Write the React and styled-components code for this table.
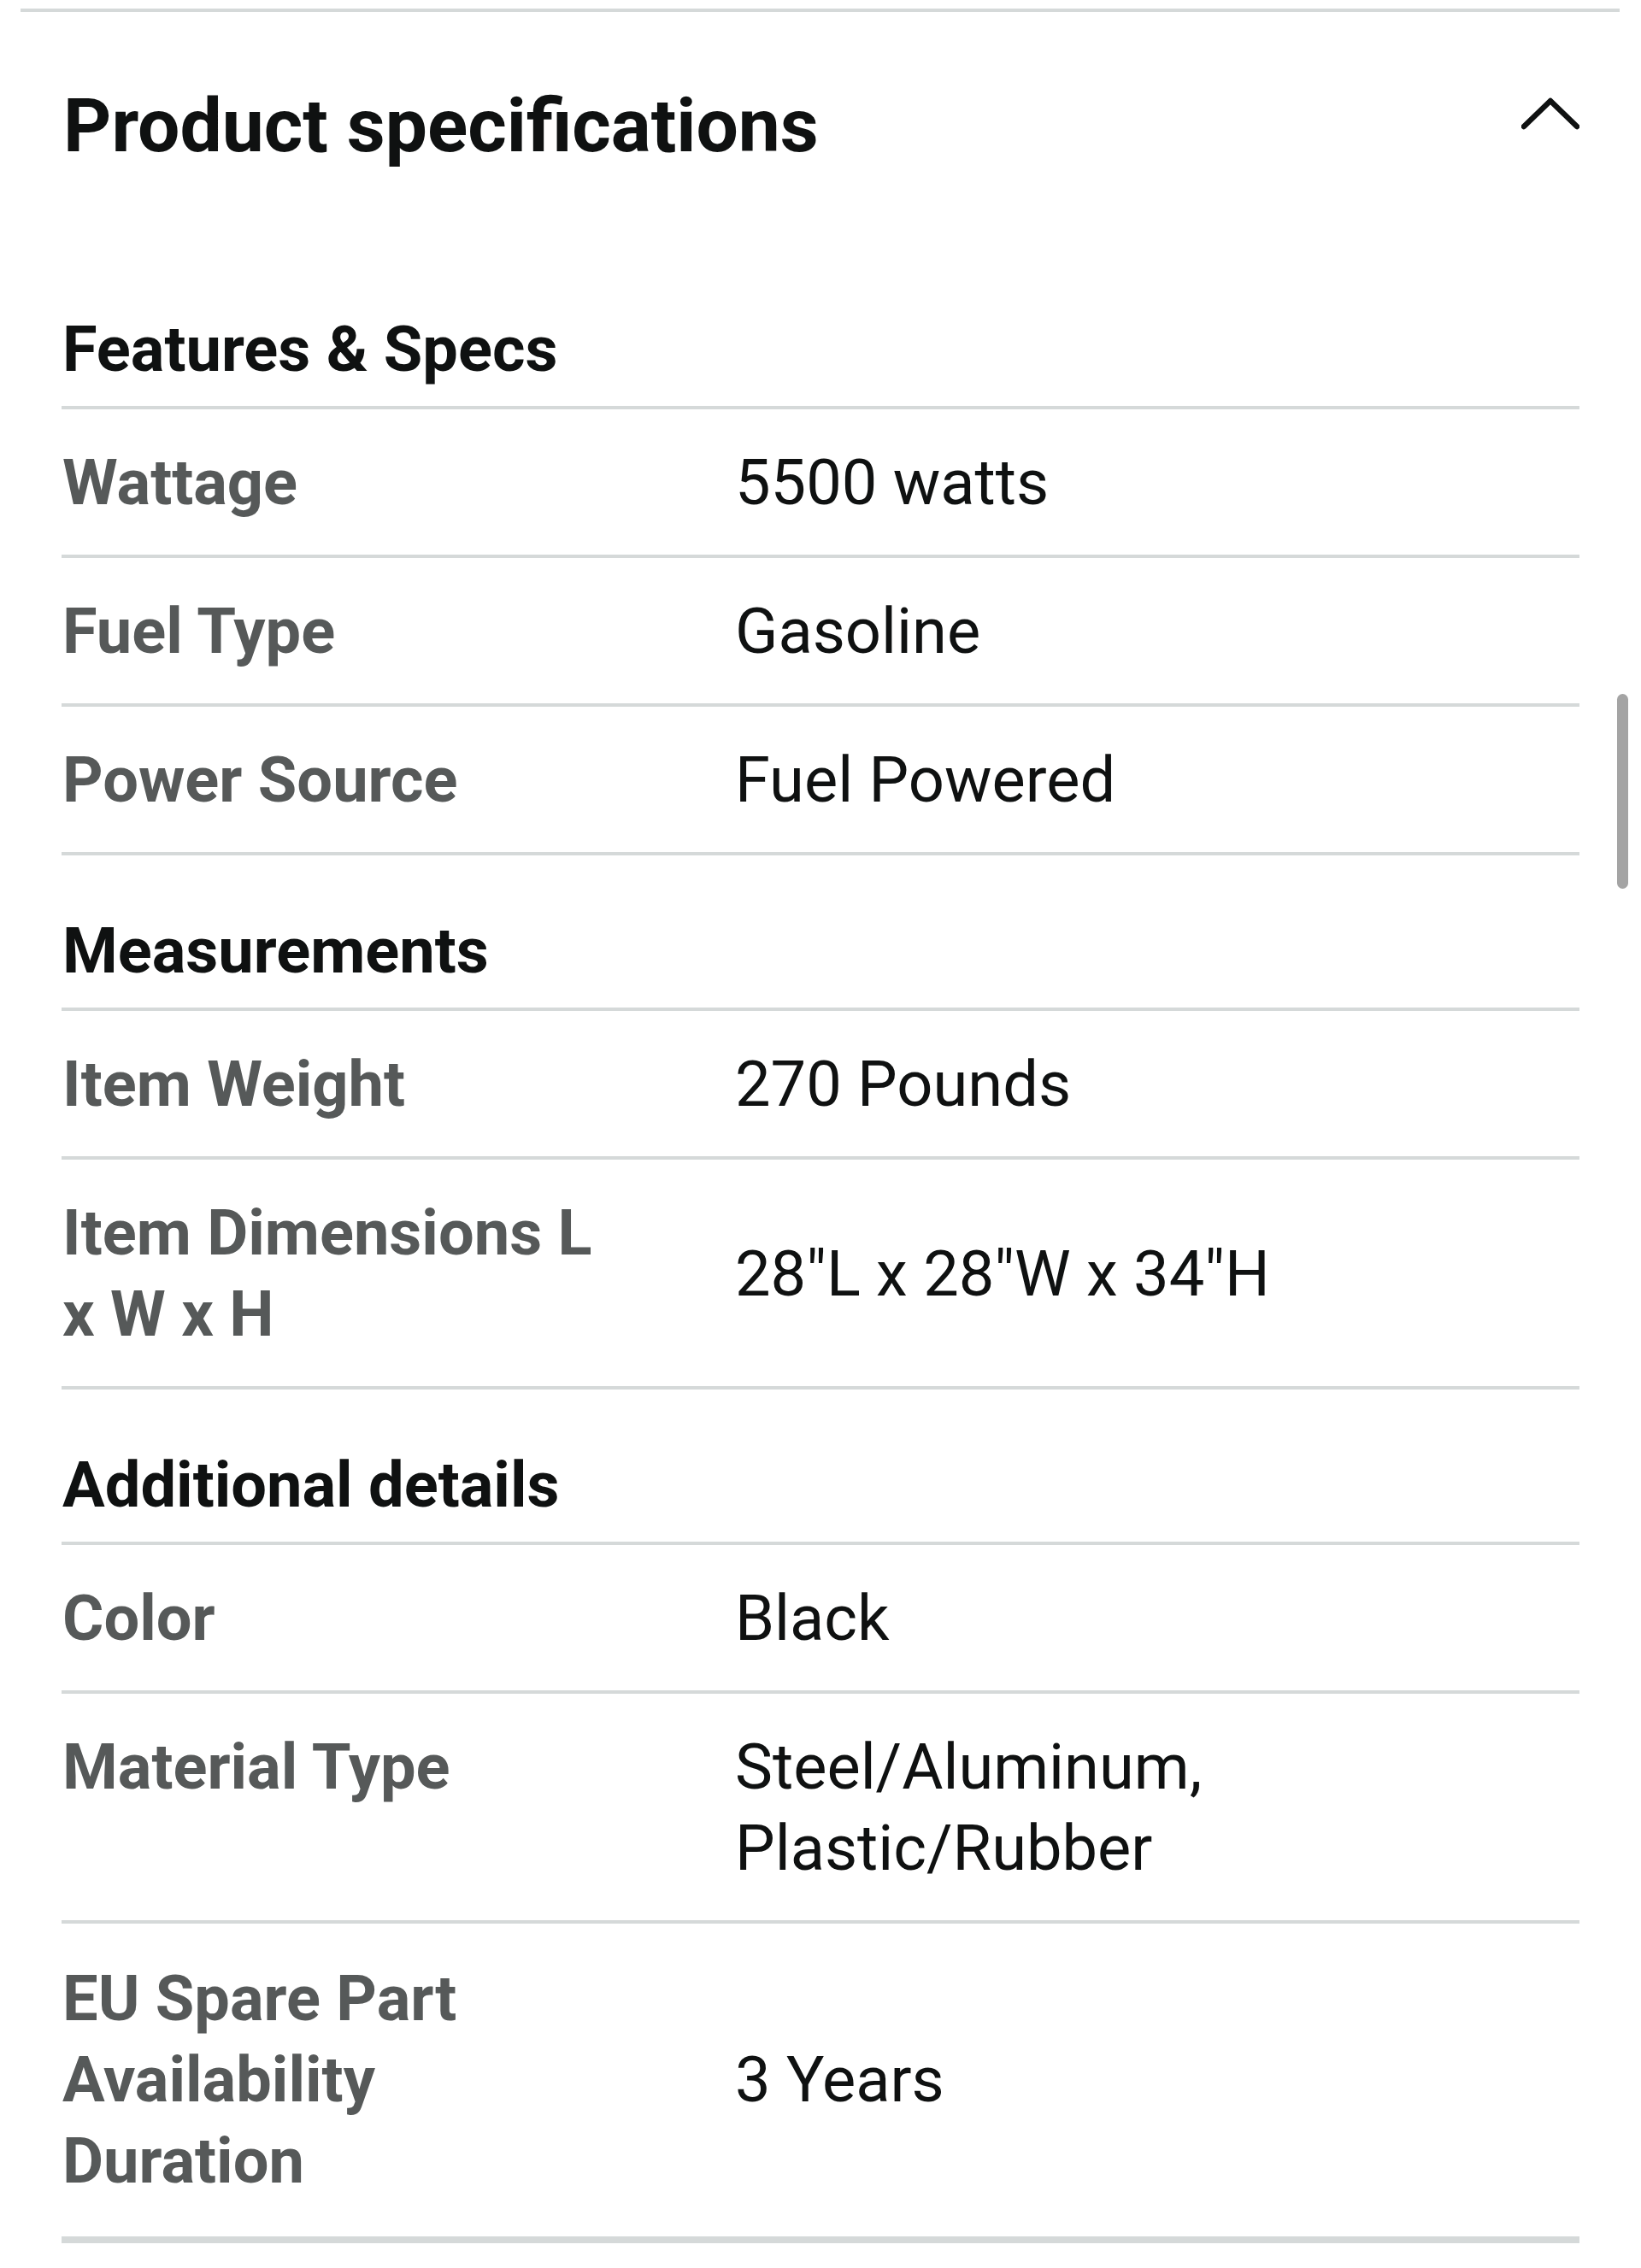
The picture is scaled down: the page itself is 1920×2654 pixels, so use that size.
import styled, { createGlobalStyle } from 'styled-components';

const GlobalStyle = createGlobalStyle`
  html, body {
    margin: 0;
    padding: 0;
    background: #ffffff;
  }
  body {
    font-family: Roboto, "Noto Sans", "Liberation Sans", sans-serif;
    color: #0f1111;
  }
`;

const specGroups = [
  {
    title: 'Features & Specs',
    rows: [
      ['Wattage', '5500 watts'],
      ['Fuel Type', 'Gasoline'],
      ['Power Source', 'Fuel Powered'],
    ],
  },
  {
    title: 'Measurements',
    rows: [
      ['Item Weight', '270 Pounds'],
      ['Item Dimensions L x W x H', '28"L x 28"W x 34"H'],
    ],
  },
  {
    title: 'Additional details',
    rows: [
      ['Color', 'Black'],
      ['Material Type', 'Steel/Aluminum, Plastic/Rubber'],
      ['EU Spare Part Availability Duration', '3 Years'],
    ],
  },
];

export default function App() {
  return (
    <>
      <GlobalStyle />
      <Page>
        <TopRule />
        <Panel>
          <Header>
            <Title>Product specifications</Title>
            <Chevron viewBox="0 0 68 40" aria-hidden="true">
              <path d="M3 36 L34 6 L65 36" />
            </Chevron>
          </Header>
          {specGroups.map((group, gi) => (
            <Group key={group.title}>
              <GroupTitle>{group.title}</GroupTitle>
              {group.rows.map(([label, value], ri) => (
                <Row key={label} $last={gi === specGroups.length - 1 && ri === group.rows.length - 1}>
                  <Label>{label}</Label>
                  <Value>{value}</Value>
                </Row>
              ))}
            </Group>
          ))}
        </Panel>
        <ScrollThumb />
      </Page>
    </>
  );
}

const Page = styled.div`
  position: relative;
  width: 1920px;
  height: 2654px;
  overflow: hidden;
  background: #ffffff;
`;

const TopRule = styled.div`
  margin: 10px 25px 0 24px;
  height: 4px;
  background: #d5d9d9;
`;

const Panel = styled.div`
  padding: 0 72px;
`;

const Header = styled.div`
  display: flex;
  justify-content: space-between;
  align-items: flex-start;
  padding-top: 82px;
  margin-bottom: 98px;
`;

const Title = styled.h2`
  margin: 0 0 0 2px;
  font-size: 87.5px;
  line-height: 103px;
  font-weight: 700;
  color: #0f1111;
`;

const Chevron = styled.svg`
  width: 68px;
  height: 40px;
  margin-top: 16px;
  fill: none;
  stroke: #0f1111;
  stroke-width: 6.5;
  stroke-linecap: round;
  stroke-linejoin: round;
`;

const Group = styled.section`
  display: flex;
  flex-direction: column;
`;

const GroupTitle = styled.h3`
  margin: 0;
  padding: 64px 0 19px 1px;
  font-size: 74px;
  line-height: 95px;
  font-weight: 700;
  color: #0f1111;
  border-bottom: 4px solid #d5d9d9;
`;

const Row = styled.div`
  display: grid;
  grid-template-columns: 788px 1fr;
  padding: ${(p) => (p.$last ? '40px 0 41px' : '38px 0 37px')};
  border-bottom: ${(p) => (p.$last ? '8px' : '4px')} solid #d5d9d9;
`;

const Label = styled.div`
  align-self: start;
  box-sizing: border-box;
  padding-left: 1px;
  padding-right: 148px;
  font-size: 74px;
  line-height: 95px;
  font-weight: 700;
  color: #565959;
`;

const Value = styled.div`
  align-self: center;
  font-size: 74px;
  line-height: 95px;
  font-weight: 400;
  color: #0f1111;
`;

const ScrollThumb = styled.div`
  position: absolute;
  left: 1892px;
  top: 812px;
  width: 13px;
  height: 228px;
  border-radius: 7px;
  background: #a4a4a4;
`;
